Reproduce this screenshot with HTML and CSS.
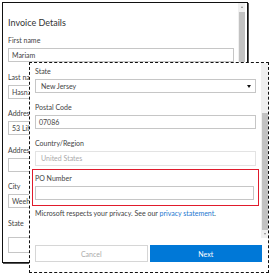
FILE: index.html
```html
<!DOCTYPE html>
<html lang="en">
<head>
  <meta charset="UTF-8" />
  <title>Invoice Details</title>
  <link rel="stylesheet" href="styles.css">
</head>
<body>

  <!-- Back window -->
  <div class="window back">
    <div class="scroll-body">
      <div class="content">
        <div class="title">Invoice Details</div>
        <div class="field"><label>First name</label><div class="input">Mariam</div></div>
        <div class="field"><label>Last name</label><div class="input">Hasnaoui</div></div>
        <div class="field"><label>Address</label><div class="input">53 Liberty Street</div></div>
        <div class="field"><label>Address 2</label><div class="input"></div></div>
        <div class="field"><label>City</label><div class="input">Weehawken</div></div>
        <div class="field last"><label>State</label><div class="input"></div></div>
      </div>
      <div class="scrollbar">
        <div class="arrow up"></div>
        <div class="thumb"></div>
      </div>
    </div>
  </div>

  <!-- Front dialog -->
  <div class="window front">
    <div class="scroll-body">
      <div class="content">
        <div class="field">
          <label>State</label>
          <div class="input select">New Jersey<span class="caret"></span></div>
        </div>
        <div class="field">
          <label>Postal Code</label>
          <div class="input">07086</div>
        </div>
        <div class="field">
          <label>Country/Region</label>
          <div class="input disabled">United States</div>
        </div>
        <div class="field highlight">
          <label>PO Number</label>
          <div class="input"></div>
        </div>
        <p class="privacy">Microsoft respects your privacy. See our <a href="#">privacy statement</a>.</p>
      </div>
      <div class="scrollbar">
        <div class="thumb"></div>
        <div class="arrow down"></div>
      </div>
    </div>
    <div class="footer">
      <button class="btn cancel">Cancel</button>
      <button class="btn next">Next</button>
    </div>
  </div>

</body>
</html>
```

FILE: styles.css
```css
body {
  margin: 0;
  padding: 2px;
  background: #fff;
  color: #444;
  font-family: 'Lato', 'Open Sans', sans-serif;
  font-size: 7px;
  position: relative;
  width: 274px;
  height: 277px;
  box-sizing: border-box;
  overflow: hidden;
}

.window {
  background: #fff;
  box-sizing: border-box;
  display: flex;
  flex-direction: column;
}

.back {
  width: 246px;
  height: 261px;
  border: 1px solid #111;
  box-shadow: 1px 1px 0 #555;
}

.front {
  position: absolute;
  left: 29px;
  top: 62px;
  width: 240px;
  height: 211px;
  border: 1px dashed #111;
}

.scroll-body {
  flex: 1;
  display: flex;
  min-height: 0;
}

.content {
  flex: 1;
  overflow: hidden;
}

.back .content {
  padding: 13px 4px 0 5px;
}

.title {
  font-size: 9px;
  line-height: 14px;
  margin-bottom: 5px;
  color: #333;
}

.field label {
  display: block;
  height: 10px;
  line-height: 10px;
  margin-bottom: 3px;
}

.input {
  height: 14px;
  border: 1px solid #c6c6c6;
  box-sizing: border-box;
  padding: 0 3px;
  line-height: 12px;
  color: #444;
  position: relative;
}

.back .field {
  margin-bottom: 9.5px;
}

.back .field.last .input {
  margin-top: 9px;
  height: 16px;
}

.front .content {
  padding: 3px 5px 0 5px;
}

.front .field {
  margin-bottom: 9px;
}

.input.select {
  padding-left: 5px;
}

.caret {
  position: absolute;
  right: 4px;
  top: 5px;
  width: 0;
  height: 0;
  border-left: 2px solid transparent;
  border-right: 2px solid transparent;
  border-top: 3px solid #111;
}

.input.disabled {
  color: #aaa;
  border-color: #e3e3e3;
  height: 15px;
  padding-left: 5px;
}

.field.highlight {
  border: 1px solid #e01b2c;
  margin: -6px -3px 2px -3px;
  padding: 3px 4px 5px 2px;
}

.privacy {
  margin: 0;
  line-height: 10px;
}

.privacy a {
  color: #1b78d0;
  text-decoration: none;
}

.scrollbar {
  width: 7px;
  background: #f0f0f0;
  display: flex;
  flex-direction: column;
  align-items: center;
}

.back .scrollbar {
  margin-right: 2px;
}

.arrow {
  width: 0;
  height: 0;
  border-left: 1.5px solid transparent;
  border-right: 1.5px solid transparent;
  margin: 3px 0;
}

.arrow.up {
  border-bottom: 2px solid #888;
}

.arrow.down {
  border-top: 2px solid #888;
}

.scrollbar .thumb {
  width: 6px;
  background: #c2c2c2;
  flex: 1;
}

.back .scrollbar .thumb {
  margin-top: 1px;
}

.front .scrollbar .thumb {
  margin-top: 50px;
}

.footer {
  display: flex;
  gap: 2px;
  padding: 7px 6px 10px 5px;
}

.btn {
  flex: 1;
  height: 17px;
  font-family: inherit;
  font-size: 7px;
  border: 1px solid #d6d6d6;
  background: #fff;
  color: #aaa;
  padding: 0;
}

.btn.next {
  background: #0078d7;
  border-color: #0078d7;
  color: #fff;
}
```
